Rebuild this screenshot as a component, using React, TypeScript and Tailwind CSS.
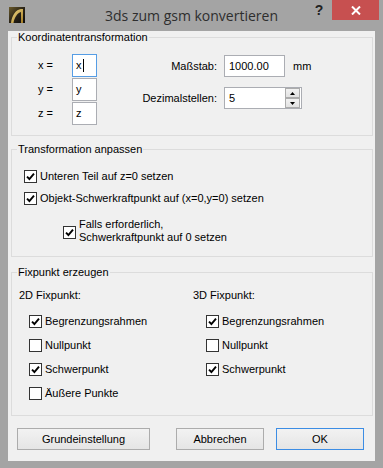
import React from "react";

const ui = "font-['Liberation_Sans',Arial,sans-serif] text-[11px] leading-[13px] text-black";

function Check({ checked, className = "" }: { checked?: boolean; className?: string }) {
  return (
    <span className={`flex h-[13px] w-[13px] shrink-0 items-center justify-center border border-[#333333] bg-white ${className}`}>
      {checked && (
        <svg width="9" height="9" viewBox="0 0 9 9">
          <path d="M1 4.6 L3.4 7 L8 1.6" fill="none" stroke="#000" strokeWidth="1.9" />
        </svg>
      )}
    </span>
  );
}

function CheckRow({ label, checked, h = "h-[22px]" }: { label: string; checked?: boolean; h?: string }) {
  return (
    <div className={`flex items-center gap-[3px] ${h}`}>
      <Check checked={checked} />
      <span>{label}</span>
    </div>
  );
}

function Group({ title, className = "", children }: { title: string; className?: string; children: React.ReactNode }) {
  return (
    <fieldset className={`ml-[3px] mr-[2px] border border-[#dcdcdc] ${className}`}>
      <legend className="ml-[5px] px-[1px] leading-[13px]">{title}</legend>
      {children}
    </fieldset>
  );
}

function Button({ children, w, primary }: { children: React.ReactNode; w: string; primary?: boolean }) {
  return (
    <div
      className={`flex h-[22px] items-center justify-center border bg-gradient-to-b from-[#f2f2f2] to-[#e5e5e5] ${
        primary ? "border-[#3c8de4]" : "border-[#acacac]"
      } ${w}`}
    >
      {children}
    </div>
  );
}

export default function App() {
  return (
    <div className={`flex h-[468px] w-[383px] flex-col bg-[#a4a4a4] ${ui}`}>
      {/* title bar */}
      <div className="grid h-[31px] shrink-0 grid-cols-[1fr_auto_1fr]">
        <div className="pl-[9px] pt-[7px]">
          <svg width="16" height="16" viewBox="0 0 16 16">
            <defs>
              <linearGradient id="bg" x1="0" y1="0" x2="1" y2="1">
                <stop offset="0" stopColor="#6b5a2a" />
                <stop offset="0.5" stopColor="#2a2418" />
                <stop offset="1" stopColor="#0c0c0c" />
              </linearGradient>
              <linearGradient id="gold" x1="0" y1="0" x2="1" y2="1">
                <stop offset="0" stopColor="#f3dd8a" />
                <stop offset="1" stopColor="#a37a22" />
              </linearGradient>
            </defs>
            <rect width="16" height="16" fill="url(#bg)" />
            <path d="M2 16 C3 8 7 2.5 12 2 L14 2 L14 16 L12 16 L12 5 C8.5 6 5.5 10 4.5 16 Z" fill="url(#gold)" />
          </svg>
        </div>
        <div className="flex items-center pb-[1px] font-['Open_Sans',sans-serif] text-[14px] text-[#2e2e2e]">
          3ds zum gsm konvertieren
        </div>
        <div className="flex items-start justify-end pr-[4px]">
          <div className="flex h-[20px] w-[26px] items-center justify-center font-['Liberation_Sans',Arial,sans-serif] text-[14px] font-bold text-[#222]">
            ?
          </div>
          <div className="flex h-[20px] w-[47px] items-center justify-center bg-[#c75050]">
            <svg width="10" height="9" viewBox="0 0 10 9">
              <path d="M1 0.5 L9 8.5 M9 0.5 L1 8.5" stroke="#fff" strokeWidth="2" />
            </svg>
          </div>
        </div>
      </div>

      {/* client area */}
      <div className="mx-[8px] mb-[7px] flex flex-1 flex-col bg-[#f0f0f0]">
        <Group title="Koordinatentransformation">
          <div className="flex pl-[26px] pt-[10px] pb-[10px]">
            <div className="flex flex-col gap-[1px]">
              {[
                ["x =", "x", true],
                ["y =", "y", false],
                ["z =", "z", false],
              ].map(([label, val, focus]) => (
                <div key={label as string} className="flex h-[23px] items-center">
                  <span className="w-[34px]">{label}</span>
                  <div
                    className={`flex h-[23px] w-[25px] items-center border bg-white pl-[3px] ${
                      focus ? "border-[#569de5]" : "border-[#abadb3]"
                    }`}
                  >
                    <span>{val}</span>
                    {focus && <span className="ml-[1px] h-[13px] w-[1px] bg-black" />}
                  </div>
                </div>
              ))}
            </div>
            <div className="ml-[20px] flex flex-col gap-[10px] pt-[1px]">
              <div className="flex items-center gap-[7px]">
                <span className="w-[100px] text-right">Maßstab:</span>
                <div className="flex h-[22px] w-[61px] items-center border border-[#abadb3] bg-white pl-[4px]">1000.00</div>
                <span className="ml-[1px]">mm</span>
              </div>
              <div className="flex items-center gap-[7px]">
                <span className="w-[100px] text-right">Dezimalstellen:</span>
                <div className="flex h-[22px] w-[78px] items-center border border-[#abadb3] bg-white pl-[4px]">
                  <span className="flex-1">5</span>
                  <div className="flex flex-col gap-[0px] pr-[1px]">
                    <div className="flex h-[10px] w-[15px] items-center justify-center border border-[#acacac] bg-gradient-to-b from-[#f2f2f2] to-[#e2e2e2]">
                      <svg width="5" height="3" viewBox="0 0 5 3">
                        <path d="M0 3 L2.5 0 L5 3 Z" fill="#000" />
                      </svg>
                    </div>
                    <div className="flex h-[10px] w-[15px] items-center justify-center border border-[#acacac] bg-gradient-to-b from-[#f2f2f2] to-[#e2e2e2]">
                      <svg width="5" height="3" viewBox="0 0 5 3">
                        <path d="M0 0 L5 0 L2.5 3 Z" fill="#000" />
                      </svg>
                    </div>
                  </div>
                </div>
              </div>
            </div>
          </div>
        </Group>

        <Group title="Transformation anpassen" className="mt-[7px]">
          <div className="flex flex-col pl-[12px] pt-[9px] pb-[12px]">
            <CheckRow checked label="Unteren Teil auf z=0 setzen" />
            <CheckRow checked label="Objekt-Schwerkraftpunkt auf (x=0,y=0) setzen" />
            <div className="mt-[9px] flex items-center gap-[3px] pl-[39px]">
              <Check checked className="mt-[3px]" />
              <span>
                Falls erforderlich,
                <br />
                Schwerkraftpunkt auf 0 setzen
              </span>
            </div>
          </div>
        </Group>

        <Group title="Fixpunkt erzeugen" className="mt-[9px]">
          <div className="grid grid-cols-[174px_1fr] pl-[7px] pt-[10px] pb-[10px]">
            <div>
              <div className="mb-[7px]">2D Fixpunkt:</div>
              <div className="pl-[10px]">
                <CheckRow checked label="Begrenzungsrahmen" h="h-[24px]" />
                <CheckRow label="Nullpunkt" h="h-[24px]" />
                <CheckRow checked label="Schwerpunkt" h="h-[24px]" />
                <CheckRow label="Äußere Punkte" h="h-[24px]" />
              </div>
            </div>
            <div>
              <div className="mb-[7px]">3D Fixpunkt:</div>
              <div className="pl-[13px]">
                <CheckRow checked label="Begrenzungsrahmen" h="h-[24px]" />
                <CheckRow label="Nullpunkt" h="h-[24px]" />
                <CheckRow checked label="Schwerpunkt" h="h-[24px]" />
              </div>
            </div>
          </div>
        </Group>

        <div className="mt-[12px] flex pl-[9px] pr-[11px]">
          <Button w="w-[133px]">Grundeinstellung</Button>
          <div className="ml-auto">
            <Button w="w-[88px]">Abbrechen</Button>
          </div>
          <div className="ml-[12px]">
            <Button w="w-[88px]" primary>
              OK
            </Button>
          </div>
        </div>
      </div>
    </div>
  );
}
